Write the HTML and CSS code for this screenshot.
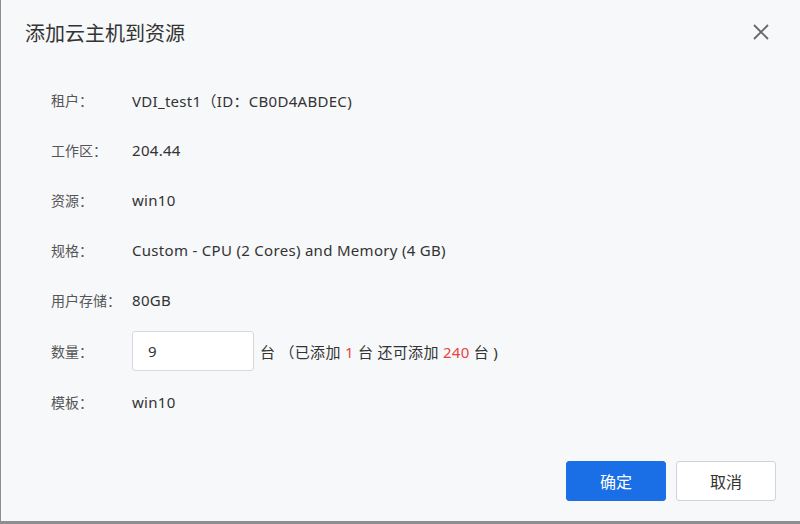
FILE: index.html
```html
<!DOCTYPE html>
<html lang="zh-CN">

<head>
    <meta charset="UTF-8" />
    <meta name="viewport" content="width=device-width, initial-scale=1.0" />
    <title>添加云主机到资源</title>
    <link rel="stylesheet" href="styles.css">
</head>

<body>
    <div class="dialog">
        <!-- Header -->
        <div class="dialog-header">
            <span class="dialog-title">添加云主机到资源</span>
            <span class="dialog-close">
                <svg width="16" height="16" viewBox="0 0 16 16">
                    <path d="M1 1 L15 15 M15 1 L1 15" stroke="#666" stroke-width="1.8" fill="none" />
                </svg>
            </span>
        </div>

        <!-- Form -->
        <div class="dialog-body">
            <div class="row">
                <span class="label">租户：</span>
                <span class="value">VDI_test1（ID：CB0D4ABDEC)</span>
            </div>
            <div class="row">
                <span class="label">工作区：</span>
                <span class="value">204.44</span>
            </div>
            <div class="row">
                <span class="label">资源：</span>
                <span class="value">win10</span>
            </div>
            <div class="row">
                <span class="label">规格：</span>
                <span class="value">Custom - CPU (2 Cores) and Memory (4 GB)</span>
            </div>
            <div class="row">
                <span class="label">用户存储：</span>
                <span class="value">80GB</span>
            </div>
            <div class="row row-count">
                <span class="label">数量：</span>
                <input class="count-input" value="9" />
                <span class="unit">台 （已添加 <em>1</em> 台 还可添加 <em>240</em> 台 )</span>
            </div>
            <div class="row">
                <span class="label">模板：</span>
                <span class="value">win10</span>
            </div>
        </div>

        <!-- Footer -->
        <div class="dialog-footer">
            <button class="btn btn-primary">确定</button>
            <button class="btn">取消</button>
        </div>
    </div>
</body>

</html>
```

FILE: styles.css
```css
body {
    font-family: "Noto Sans", "Noto Sans CJK SC", sans-serif;
    margin: 0;
    padding: 0;
    background: #8e8e8e;
    height: 524px;
    overflow: hidden;
}

.dialog {
    margin-left: 1px;
    width: 799px;
    height: 521px;
    background: #f7f8fa;
    display: flex;
    flex-direction: column;
}

.dialog-header {
    height: 64px;
    display: flex;
    align-items: center;
    justify-content: space-between;
    padding: 0 31px 0 24px;
}

.dialog-title {
    font-size: 20px;
    color: #333;
}

.dialog-close {
    display: flex;
    cursor: pointer;
}

.dialog-body {
    padding: 11px 0 0 50px;
    flex: 1;
}

.row {
    display: flex;
    align-items: center;
    height: 50px;
    font-size: 14px;
    color: #333;
}

.row-count {
    height: 52px;
}

.label {
    width: 81px;
    color: #555;
}

.value,
.unit {
    font-size: 15px;
    letter-spacing: 0.3px;
}

.count-input {
    width: 122px;
    height: 40px;
    box-sizing: border-box;
    border: 1px solid #d5d8de;
    border-radius: 3px;
    background: #fff;
    padding: 0 15px;
    font-family: inherit;
    font-size: 15px;
    color: #333;
}

.unit {
    margin-left: 6px;
}

.unit em {
    font-style: normal;
    color: #e8463c;
}

.dialog-footer {
    display: flex;
    justify-content: flex-end;
    gap: 10px;
    padding: 0 24px 20px 0;
}

.btn {
    width: 100px;
    height: 40px;
    border: 1px solid #d0d3d9;
    border-radius: 3px;
    background: #fff;
    color: #333;
    font-family: inherit;
    font-size: 16px;
    cursor: pointer;
}

.btn-primary {
    background: #1a6fe6;
    border-color: #1a6fe6;
    color: #fff;
}
```
